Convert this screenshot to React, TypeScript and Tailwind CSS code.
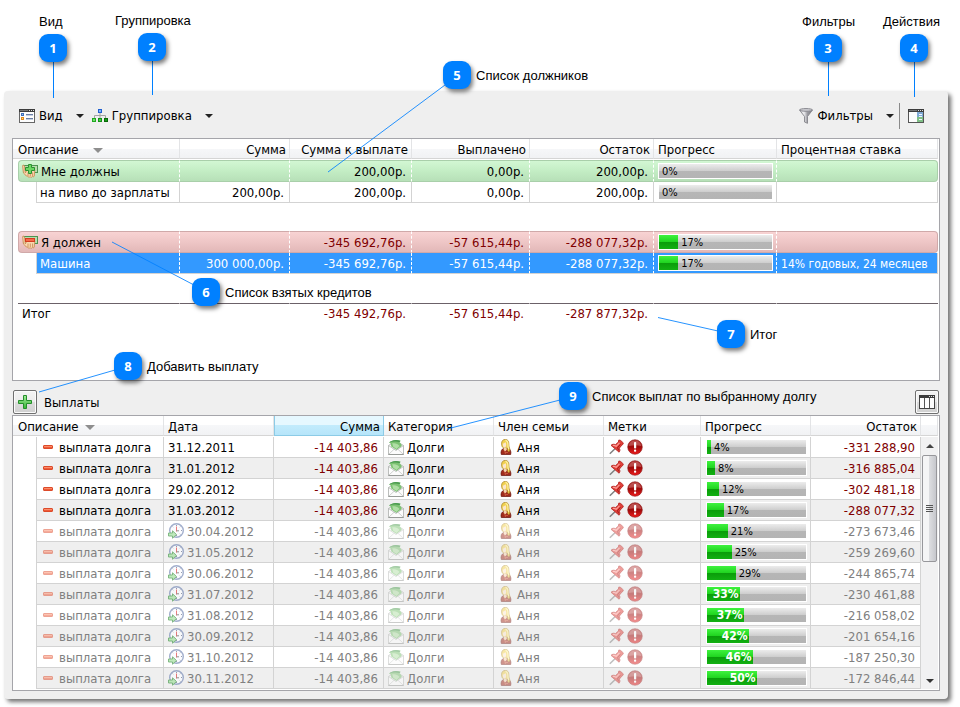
import type { ReactNode } from "react";

/* ---------- icons ---------- */

function ViewIcon() {
  return (
    <svg width="16" height="14" viewBox="0 0 16 14" aria-hidden="true">
      <rect x="0.5" y="0.5" width="15" height="13" fill="#fdfdfd" stroke="#666" />
      <rect x="0" y="0" width="16" height="3" fill="#3c3c3c" />
      <path d="M1 1.5h8" stroke="#777" />
      <path d="M10 1.5h1M12 1.5h1M14 1.5h1" stroke="#ddd" />
      <rect x="2.5" y="4.5" width="2" height="2" fill="#9dc0f0" stroke="#3f6fb8" />
      <rect x="2.5" y="8.5" width="2" height="2" fill="#ffd480" stroke="#e08a1c" />
      <path d="M7 5.5h7M7 9.5h7" stroke="#6a7ea5" />
      <path d="M7 6.500h7M7 10.500h7" stroke="#c5cfe0" />
    </svg>
  );
}

function GroupIcon() {
  return (
    <svg width="16" height="14" viewBox="0 0 16 14" aria-hidden="true">
      <path d="M8 4v2.500M2.500 9V6.500h11V9M8 6.500V9" fill="none" stroke="#a4a4a4" />
      <rect x="6.500" y="0.500" width="3" height="3" fill="#7db4ff" stroke="#1f5fd0" />
      <rect x="0.500" y="9.500" width="3" height="3" fill="#6fe06a" stroke="#1fa81f" />
      <rect x="6.500" y="9.500" width="3" height="3" fill="#46cc46" stroke="#159015" />
      <rect x="12.500" y="9.500" width="3" height="3" fill="#16a016" stroke="#086808" />
    </svg>
  );
}

function FilterIcon() {
  return (
    <svg width="14" height="16" viewBox="0 0 14 16" aria-hidden="true">
      <defs>
        <linearGradient id="funnel" x1="0" x2="1">
          <stop offset="0" stopColor="#d4d4d8" />
          <stop offset="0.35" stopColor="#eeeef0" />
          <stop offset="0.6" stopColor="#9c9ca2" />
          <stop offset="1" stopColor="#77777e" />
        </linearGradient>
      </defs>
      <path d="M0.5 2L5.500 8.500V14l3 1.300V8.500L13.500 2z" fill="url(#funnel)" stroke="#85858a" strokeWidth="0.9" />
      <ellipse cx="7" cy="1.900" rx="6.400" ry="1.400" fill="#c9c9ce" stroke="#85858b" strokeWidth="0.9" />
    </svg>
  );
}

function ActionsIcon() {
  return (
    <svg width="16" height="14" viewBox="0 0 16 14" aria-hidden="true">
      <rect x="0.500" y="0.500" width="15" height="13" fill="#fdfdfd" stroke="#555" />
      <rect x="0" y="0" width="16" height="3" fill="#3c3c3c" />
      <path d="M1 1.500h8" stroke="#777" />
      <path d="M10 1.500h1M12 1.500h1M14 1.500h1" stroke="#ddd" />
      <rect x="9" y="3" width="6" height="5" fill="#7fa9d4" />
      <rect x="9" y="8" width="6" height="5" fill="#7fbf86" />
      <path d="M11 5.500h3M11 7.500h3M11 10.500h3" stroke="#eef6ff" />
    </svg>
  );
}

function ColumnsIcon() {
  return (
    <svg width="16" height="14" viewBox="0 0 16 14" aria-hidden="true">
      <rect x="0.500" y="0.500" width="15" height="13" fill="#fdfdfd" stroke="#444" />
      <rect x="0" y="0" width="16" height="3" fill="#3c3c3c" />
      <path d="M10 1.500h1M12 1.500h1M14 1.500h1" stroke="#ddd" />
      <path d="M5.500 3v10M10.500 3v10" stroke="#555" />
    </svg>
  );
}

function PlusIcon() {
  return (
    <svg width="14" height="14" viewBox="0 0 14 14" aria-hidden="true">
      <defs>
        <linearGradient id="plus" x1="0" y1="0" x2="0" y2="1">
          <stop offset="0" stopColor="#a4eb9a" />
          <stop offset="1" stopColor="#37b637" />
        </linearGradient>
      </defs>
      <path d="M5.500 0.500h3v5h5v3h-5v5h-3v-5h-5v-3h5z" fill="url(#plus)" stroke="#248f2a" strokeLinejoin="round" />
    </svg>
  );
}

function MoneyHandIcon({ kind }: { kind: "plus" | "minus" }) {
  return (
    <svg width="16" height="14" viewBox="0 0 16 14" aria-hidden="true">
      <rect x="1.500" y="1.500" width="14" height="7" fill="#b9dcae" stroke="#4c9350" />
      <path d="M0.600 1.500c1-.9 2 0 2 1.500l.7 6 1.500-3h8l-.5 6c-.3 1-1.300 1-1.700.3-.5 1.200-1.800 1.300-2.500.4-.8.700-2 .6-2.400-.5C3.500 12 2.300 10 1.300 8.300z" fill="#f8d7b0" stroke="#cc9058" strokeWidth="0.9" />
      <path d="M6 8.500v3.500M8.300 8.500v3.500M10.600 8.500v3.500" stroke="#cc9058" strokeWidth="0.900" />
      {kind === "plus" ? (
        <path d="M6.500 0.500h3v3h3v3h-3v3h-3v-3h-3v-3h3z" fill="#6bd763" stroke="#2a9230" />
      ) : (
        <rect x="3.500" y="3.500" width="9" height="3" fill="#f5694a" stroke="#d43c20" />
      )}
    </svg>
  );
}

function MinusIcon() {
  return (
    <svg width="10" height="4" viewBox="0 0 10 4" aria-hidden="true">
      <rect x="0.500" y="0.500" width="9" height="3" rx="0.500" fill="#fb8d6a" stroke="#dc4a2a" />
      <path d="M1 2.500h8" stroke="#ee5a38" />
    </svg>
  );
}

function ClockIcon() {
  return (
    <svg width="16" height="16" viewBox="0 0 16 16" aria-hidden="true">
      <circle cx="8.500" cy="7.500" r="6.800" fill="#fbfcff" stroke="#7b8db8" strokeWidth="1.400" />
      <path d="M8.500 2v1M14 7.500h-1M8.500 13v-1M12.400 3.600l-.6.600M12.400 11.400l-.6-.6M4.600 3.600l.6.600" stroke="#6b7690" />
      <path d="M8.500 3.500v5" stroke="#e04545" />
      <path d="M8.500 7.800h2.500" stroke="#666" />
      <path d="M0.500 10h4V7.800l4 3.700-4 3.700V13h-4z" fill="#a5e0a0" stroke="#3f9446" strokeWidth="0.900" />
    </svg>
  );
}

function EnvelopeIcon() {
  return (
    <svg width="16" height="16" viewBox="0 0 16 16" aria-hidden="true">
      <path d="M0.500 6.500L3 5h10l2.500 1.500v9H0.500z" fill="#f4f5f4" stroke="#a9aca9" strokeWidth="0.800" />
      <path d="M1 3.500C4 .8 8 .3 12.500 1.700l-1 1.600c1.300.8 2 2 2.300 3.700L8.500 11 3 7.200C3.500 5.500 2.800 4 1 3.500z" fill="#7cc272" />
      <path d="M1 3.500C4 .8 8 .3 12.500 1.700l-1 1.600C8 2.200 5 2.500 1 3.500z" fill="#4c9a50" />
      <path d="M4 4.500c3-.8 5.500 0 7.500 2.500l-3 3L5 7.500c0-1.200-.3-2.200-1-3z" fill="#b0dea5" />
      <path d="M0.500 6.500L8 11.500l7.500-5v9H0.500z" fill="#fcfcfc" stroke="#b4b6b4" strokeWidth="0.800" />
      <path d="M0.800 15.200L6 10.300M15.200 15.200L10 10.300" stroke="#c4c6c4" strokeWidth="0.800" />
      <path d="M0.500 15.500h15" stroke="#989b98" />
    </svg>
  );
}

function WomanIcon() {
  return (
    <svg width="12" height="16" viewBox="0 0 12 16" aria-hidden="true">
      <path d="M1.300 15.500C0.500 12.500 1.500 9.800 4 9.500h4c2.500.3 3.300 3 2.700 6z" fill="#a02c1c" stroke="#651008" strokeWidth="0.700" />
      <path d="M5 13.500h3M4.500 11.500l1 3.500" stroke="#c95a42" strokeWidth="0.900" />
      <path d="M1.600 5C1.300 1.800 3.200.4 5.300.4c2.400 0 3.500 1.700 3.500 4 0 2 .1 3.300.7 4.600.6 1.300.5 3-.7 3.800C7.600 12.500 7.400 10.500 7.300 9L3.500 8.800C2.300 8.500 1.700 7 1.600 5z" fill="#f0d04e" stroke="#a8801c" strokeWidth="0.700" />
      <path d="M5.500 1.300C7.300 1.500 7.900 3 7.900 5s.2 3.500.8 5" fill="none" stroke="#fdf0a0" strokeWidth="1.200" />
      <path d="M2.700 4.500c1.200-.2 2.200-.8 2.600-1.600.7.800 1.100 2 .9 3.300-.2 1.400-1 2.300-1.900 2.300S2.700 7 2.700 4.500z" fill="#fbe6cc" />
      <path d="M4 8.500h2.500l.3 2.300-1.500 1.400L3.600 11z" fill="#f6d5ad" />
    </svg>
  );
}

function PinIcon() {
  return (
    <svg width="15" height="16" viewBox="0 0 15 16" aria-hidden="true">
      <path d="M0.800 14.800L6 9.800" stroke="#808080" strokeWidth="1.500" />
      <path d="M9.800 1c1.600-.4 4.600 2.400 4.500 4l-1.500 1.200-2.500 3c.9 1.400.8 2.700-.2 4L2 6.300c1.300-1.200 2.800-1.400 4.400-.6l3-2.700z" fill="#e0403a" stroke="#b01c18" strokeWidth="0.800" />
      <path d="M3.800 6.500c1.500-.4 2.300 0 3.300.9l3.400-3.600" fill="none" stroke="#ff9f98" strokeWidth="1.200" />
      <path d="M9.500 11.300c0-1-.4-1.800-1.200-2.400l3.200-3.600" fill="none" stroke="#a31613" strokeWidth="0.900" />
    </svg>
  );
}

function AlertIcon() {
  return (
    <svg width="16" height="16" viewBox="0 0 16 16" aria-hidden="true">
      <defs>
        <linearGradient id="alert" x1="0" y1="0" x2="0" y2="1">
          <stop offset="0" stopColor="#a81a18" />
          <stop offset="0.5" stopColor="#a00a0a" />
          <stop offset="1" stopColor="#f01c1c" />
        </linearGradient>
      </defs>
      <circle cx="8" cy="8" r="7.300" fill="url(#alert)" stroke="#8d1a1a" strokeWidth="0.600" />
      <path d="M1.800 7C2 3.500 4.800 1.500 8 1.500S14 3.500 14.200 7C10 5.800 6 6 1.800 7z" fill="#fff" fillOpacity="0.250" />
      <rect x="7" y="3" width="2.200" height="6.500" rx="0.800" fill="#fff" />
      <rect x="7" y="10.600" width="2.200" height="2.200" rx="0.800" fill="#fff" />
    </svg>
  );
}

function Arrow({ width, height, className }: { width: number; height: number; className: string }) {
  return (
    <svg width={width} height={height} viewBox="0 0 10 5" preserveAspectRatio="none" className={className} aria-hidden="true">
      <path d="M0 0h10L5 5z" />
    </svg>
  );
}

/* ---------- shared parts ---------- */

const headBg =
  "bg-[linear-gradient(#ffffff_50%,#f6f7f9_50%,#f1f2f4)] border-b border-b-[#d5d5d5] border-r border-r-[#e3e4e6]";
const line = "border-b border-r border-[#d3d3d3]";

function HeadCell({
  children,
  right = false,
  active = false,
  span = 1,
  indent = false,
}: {
  children: ReactNode;
  right?: boolean;
  active?: boolean;
  span?: number;
  indent?: boolean;
}) {
  const bg = active
    ? "bg-[linear-gradient(#e6f8ff_50%,#c2ebfc_50%,#b6e5fa)] border-b border-r border-l border-[#8ccbe6]"
    : headBg;
  return (
    <th
      colSpan={span}
      scope="col"
      className={`h-5 p-0 pt-[3px] font-normal ${bg} ${right ? "pr-[3px] text-right" : "text-left"} ${indent ? "pl-[5px]" : "pl-1"}`}
    >
      {children}
    </th>
  );
}

function ProgressBar({ value }: { value: number }) {
  const inside = value > 30;
  return (
    <div
      role="progressbar"
      aria-valuenow={value}
      aria-label="Прогресс"
      className="flex h-4 items-stretch border border-white bg-[linear-gradient(#ececec,#cdcdcd_50%,#b6b6b6_50%,#b4b4b4)] text-[11px] leading-4 text-black"
    >
      {value > 0 && (
        <div
          className="flex justify-end bg-[linear-gradient(#3ef23e,#1fd31f_50%,#0a9c0a_50%,#12b012)]"
          style={{ width: `${value}%` }}
        >
          {inside && <span className="pr-px text-xs leading-[14px] font-bold text-white">{value}%</span>}
        </div>
      )}
      {!inside && <span className="pl-[3px]">{value}%</span>}
    </div>
  );
}

function ToolButton({ icon, label }: { icon: ReactNode; label: string }) {
  return (
    <button type="button" className="flex items-center gap-1">
      {icon}
      <span>{label}</span>
      <Arrow width={8} height={4} className="ml-[9px] fill-[#222]" />
    </button>
  );
}

/* ---------- debts table ---------- */

type Debt = { sum: string; due: string; paid: string; rest: string; progress: number; rate: string };

function GroupRow({ tone, label, icon, debt }: { tone: "green" | "red"; label: string; icon: ReactNode; debt: Debt }) {
  const bg =
    tone === "green"
      ? "bg-[linear-gradient(#d2f7d3,#c3edc4_50%,#b7e0b8)] border-y border-y-[#a9cfaa]"
      : "bg-[linear-gradient(#f8d3d3,#eec6c6_50%,#e2b8b8)] border-y border-y-[#d0a9a9]";
  const edge = tone === "green" ? "border-[#a9cfaa]" : "border-[#d0a9a9]";
  const num = `p-0 pt-0.5 pr-[5px] text-right border-r border-r-white [border-right-style:dashed] ${bg} ${tone === "red" ? "text-[#800000]" : ""}`;
  return (
    <tr className="h-[22px]">
      <td className="p-0" />
      <td colSpan={2} className={`rounded-l-sm border-l border-r border-r-white p-0 pl-[3px] [border-right-style:dashed] ${edge} ${bg}`}>
        <div className="flex items-center gap-[3px]">
          {icon}
          <span className="pt-0.5">{label}</span>
        </div>
      </td>
      <td className={num}>{debt.sum}</td>
      <td className={num}>{debt.due}</td>
      <td className={num}>{debt.paid}</td>
      <td className={num}>{debt.rest}</td>
      <td className={`border-r border-r-white p-0 pr-[3px] pl-1 [border-right-style:dashed] ${bg}`}>
        <ProgressBar value={debt.progress} />
      </td>
      <td className={`rounded-r-sm border-r p-0 ${edge} ${bg}`}>{debt.rate}</td>
    </tr>
  );
}

function DebtRow({ label, debt, selected = false }: { label: string; debt: Debt; selected?: boolean }) {
  const tone = selected
    ? "bg-[#3399ff] text-white border-b border-b-[#d3d3d3] border-r border-r-white [border-right-style:dashed]"
    : line;
  const num = `p-0 pt-0.5 pr-[5px] text-right ${tone}`;
  return (
    <tr className="h-[21px]">
      <td className="p-0" />
      <td className="p-0" />
      <td className={`border-l border-l-[#d3d3d3] p-0 pt-0.5 pl-[3px] ${tone}`}>{label}</td>
      <td className={num}>{debt.sum}</td>
      <td className={num}>{debt.due}</td>
      <td className={num}>{debt.paid}</td>
      <td className={num}>{debt.rest}</td>
      <td className={`p-0 pr-[3px] pl-1 ${tone}`}>
        <ProgressBar value={debt.progress} />
      </td>
      <td className={`p-0 pt-0.5 pl-1 text-xs leading-4 ${selected ? "border-r border-b border-[#d3d3d3] bg-[#3399ff] text-white" : line}`}>
        {debt.rate}
      </td>
    </tr>
  );
}

const lent: Debt = { sum: "", due: "200,00р.", paid: "0,00р.", rest: "200,00р.", progress: 0, rate: "" };
const owed: Debt = { sum: "", due: "-345 692,76р.", paid: "-57 615,44р.", rest: "-288 077,32р.", progress: 17, rate: "" };

function DebtsTable() {
  const total = "border-t border-t-[#6b6168] border-r border-r-white p-0";
  return (
    <div className="min-h-[243px] border border-[#a5a5aa] bg-white pr-px">
      <table className="w-full table-fixed border-separate border-spacing-0 whitespace-nowrap">
        <colgroup>
          <col className="w-[5px]" />
          <col className="w-[18px]" />
          <col className="w-36" />
          <col className="w-[110px]" />
          <col className="w-[122px]" />
          <col className="w-[118px]" />
          <col className="w-[124px]" />
          <col className="w-[123px]" />
          <col />
        </colgroup>
        <thead>
          <tr>
            <HeadCell span={3} indent>
              <span className="flex items-center gap-[14px]">
                Описание
                <Arrow width={10} height={5} className="fill-[#8e8e8e]" />
              </span>
            </HeadCell>
            <HeadCell right>Сумма</HeadCell>
            <HeadCell right>Сумма к выплате</HeadCell>
            <HeadCell right>Выплачено</HeadCell>
            <HeadCell right>Остаток</HeadCell>
            <HeadCell>Прогресс</HeadCell>
            <HeadCell>Процентная ставка</HeadCell>
          </tr>
        </thead>
        <tbody>
          <tr className="h-px">
            <td colSpan={9} className="p-0" />
          </tr>
          <GroupRow tone="green" label="Мне должны" icon={<MoneyHandIcon kind="plus" />} debt={lent} />
          <DebtRow label="на пиво до зарплаты" debt={{ ...lent, sum: "200,00р." }} />
          <tr className="h-7">
            <td colSpan={9} className="p-0" />
          </tr>
          <GroupRow tone="red" label="Я должен" icon={<MoneyHandIcon kind="minus" />} debt={owed} />
          <DebtRow label="Машина" debt={{ ...owed, sum: "300 000,00р.", rate: "14% годовых, 24 месяцев" }} selected />
          <tr className="h-[29px]">
            <td colSpan={9} className="p-0" />
          </tr>
          <tr className="h-5">
            <td className="p-0" />
            <td colSpan={2} className={`${total} pl-1`}>
              Итог
            </td>
            <td className={total} />
            <td className={`${total} pr-[5px] text-right text-[#800000]`}>-345 492,76р.</td>
            <td className={`${total} pr-[5px] text-right text-[#800000]`}>-57 615,44р.</td>
            <td className={`${total} pr-[5px] text-right text-[#800000]`}>-287 877,32р.</td>
            <td className={total} />
            <td className="border-t border-t-[#6b6168] p-0" />
          </tr>
        </tbody>
      </table>
    </div>
  );
}

/* ---------- payments table ---------- */

const payments = [
  { date: "31.12.2011", progress: 4, rest: "-331 288,90", planned: false },
  { date: "31.01.2012", progress: 8, rest: "-316 885,04", planned: false },
  { date: "29.02.2012", progress: 12, rest: "-302 481,18", planned: false },
  { date: "31.03.2012", progress: 17, rest: "-288 077,32", planned: false },
  { date: "30.04.2012", progress: 21, rest: "-273 673,46", planned: true },
  { date: "31.05.2012", progress: 25, rest: "-259 269,60", planned: true },
  { date: "30.06.2012", progress: 29, rest: "-244 865,74", planned: true },
  { date: "31.07.2012", progress: 33, rest: "-230 461,88", planned: true },
  { date: "31.08.2012", progress: 37, rest: "-216 058,02", planned: true },
  { date: "30.09.2012", progress: 42, rest: "-201 654,16", planned: true },
  { date: "31.10.2012", progress: 46, rest: "-187 250,30", planned: true },
  { date: "30.11.2012", progress: 50, rest: "-172 846,44", planned: true },
];

function PaymentsTable() {
  return (
    <div className="flex border border-[#a5a5aa] bg-white pr-px pb-px">
      <table className="min-w-0 flex-1 table-fixed border-separate border-spacing-0 whitespace-nowrap">
        <colgroup>
          <col className="w-[23px]" />
          <col className="w-32" />
          <col className="w-[110px]" />
          <col className="w-[110px]" />
          <col className="w-[110px]" />
          <col className="w-[110px]" />
          <col className="w-[97px]" />
          <col className="w-[110px]" />
          <col />
        </colgroup>
        <thead>
          <tr>
            <HeadCell span={2} indent>
              <span className="flex items-center gap-[6px]">
                Описание
                <Arrow width={10} height={5} className="fill-[#8e8e8e]" />
              </span>
            </HeadCell>
            <HeadCell>Дата</HeadCell>
            <HeadCell right active>
              Сумма
            </HeadCell>
            <HeadCell>Категория</HeadCell>
            <HeadCell>Член семьи</HeadCell>
            <HeadCell>Метки</HeadCell>
            <HeadCell>Прогресс</HeadCell>
            <HeadCell right>Остаток</HeadCell>
          </tr>
        </thead>
        <tbody>
          <tr className="h-px">
            <td colSpan={9} className="p-0" />
          </tr>
          {payments.map((p, i) => {
            const fade = p.planned ? "opacity-50" : "";
            const bg = i % 2 ? "bg-[#efefef]" : "bg-white";
            const cell = `p-0 ${line} ${bg}`;
            const money = p.planned ? "text-[#808080]" : "text-[#800000]";
            return (
              <tr key={p.date} className={`h-[21px] ${p.planned ? "text-[#808080]" : ""}`}>
                <td className="p-0" />
                <td className={`${cell} border-l pl-[6px]`}>
                  <div className="flex items-center gap-[6px]">
                    <span className={fade}>
                      <MinusIcon />
                    </span>
                    <span className="pt-0.5">выплата долга</span>
                  </div>
                </td>
                <td className={`${cell} pl-1`}>
                  <div className="flex items-center gap-[3px]">
                    {p.planned && (
                      <span className="opacity-70">
                        <ClockIcon />
                      </span>
                    )}
                    <span className="pt-0.5">{p.date}</span>
                  </div>
                </td>
                <td className={`${cell} pt-0.5 pr-[5px] text-right ${money}`}>-14 403,86</td>
                <td className={`${cell} pl-1`}>
                  <div className="flex items-center gap-[3px]">
                    <span className={fade}>
                      <EnvelopeIcon />
                    </span>
                    <span className="pt-0.5">Долги</span>
                  </div>
                </td>
                <td className={`${cell} pl-[6px]`}>
                  <div className="flex items-center gap-[5px]">
                    <span className={fade}>
                      <WomanIcon />
                    </span>
                    <span className="pt-0.5">Аня</span>
                  </div>
                </td>
                <td className={`${cell} pl-[5px]`}>
                  <div className={`flex items-center gap-[3px] ${fade}`}>
                    <PinIcon />
                    <AlertIcon />
                  </div>
                </td>
                <td className={`${cell} pr-[3px] pl-[5px]`}>
                  <ProgressBar value={p.progress} />
                </td>
                <td className={`${cell} pt-0.5 pr-[5px] text-right ${money}`}>{p.rest}</td>
              </tr>
            );
          })}
        </tbody>
      </table>
      <div className="flex w-[17px] flex-col">
        <div className={`h-5 ${headBg}`} />
        <div className="mt-px flex flex-1 flex-col items-center bg-[#f1f1f2]">
          <button type="button" aria-label="Вверх" className="flex h-[18px] w-full items-center justify-center">
            <Arrow width={8} height={4} className="rotate-180 fill-[#444]" />
          </button>
          <div className="flex h-[107px] w-[15px] flex-col items-center justify-center gap-px rounded-xs border border-[#97979b] bg-[linear-gradient(90deg,#f5f5f6_45%,#dcdde0_50%,#c6c7cc)]">
            <div className="h-px w-[7px] bg-[#555]" />
            <div className="h-px w-[7px] bg-[#555]" />
            <div className="h-px w-[7px] bg-[#555]" />
            <div className="h-px w-[7px] bg-[#555]" />
          </div>
          <button type="button" aria-label="Вниз" className="mt-auto flex h-[17px] w-full items-center justify-center">
            <Arrow width={8} height={4} className="fill-[#333]" />
          </button>
        </div>
      </div>
    </div>
  );
}

/* ---------- annotations ---------- */

const badges = [
  { n: 1, pos: "left-[39px] top-[34px]" },
  { n: 2, pos: "left-[138px] top-[33px]" },
  { n: 3, pos: "left-[814px] top-[34px]" },
  { n: 4, pos: "left-[900px] top-[34px]" },
  { n: 5, pos: "left-[443px] top-[61px]" },
  { n: 6, pos: "left-[192px] top-[278px]" },
  { n: 7, pos: "left-[717px] top-[320px]" },
  { n: 8, pos: "left-[114px] top-[352px]" },
  { n: 9, pos: "left-[559px] top-[382px]" },
];

const notes = [
  { text: "Вид", pos: "left-[39px] top-[14px]" },
  { text: "Группировка", pos: "left-[115px] top-[13px]" },
  { text: "Фильтры", pos: "left-[802px] top-[14px]" },
  { text: "Действия", pos: "left-[883px] top-[14px]" },
  { text: "Список должников", pos: "left-[476px] top-[68px]" },
  { text: "Список взятых кредитов", pos: "left-[225px] top-[285px]" },
  { text: "Итог", pos: "left-[750px] top-[327px]" },
  { text: "Добавить выплату", pos: "left-[147px] top-[359px]" },
  { text: "Список выплат по выбранному долгу", pos: "left-[592px] top-[389px]" },
];

function Annotations() {
  return (
    <div className="pointer-events-none absolute inset-0 font-['Liberation_Sans',Arial,sans-serif] text-[13px] leading-4 whitespace-nowrap">
      <svg className="absolute top-0 left-0" width="960" height="707" viewBox="0 0 960 707" aria-hidden="true">
        <g stroke="#0080ff" fill="none">
          <path d="M53.500 60V98M152.500 60V95M828.500 60V96M914.500 60V97" />
          <path d="M445 85L328 172M194 285L112 242M718 331L658 317.500M115 370L39 392M560 400L447 429" strokeOpacity="0.850" />
        </g>
      </svg>
      {badges.map((b) => (
        <span
          key={b.n}
          className={`absolute flex size-7 items-center justify-center rounded-[9px] bg-[#0080ff] font-['Noto_Sans',sans-serif] text-[13px] font-bold text-white shadow-[2px_3px_4px_rgba(0,0,0,0.5)] ${b.pos}`}
        >
          {b.n}
        </span>
      ))}
      {notes.map((n) => (
        <span key={n.text} className={`absolute ${n.pos}`}>
          {n.text}
        </span>
      ))}
    </div>
  );
}

export default function App() {
  const square =
    "flex size-6 items-center justify-center rounded-xs border border-[#707070] bg-[linear-gradient(#f4f4f4,#ebebeb_50%,#dddddd_50%,#d0d0d0)] shadow-[inset_0_0_0_1px_#fbfbfb]";
  return (
    <div className="relative min-h-screen bg-white pt-[91px] pr-3 pb-2 pl-1 font-['DejaVu_Sans_Condensed','Noto_Sans',sans-serif] text-[13px] leading-4 text-black">
      <main className="rounded-sm bg-[#efefef] px-2 pb-2 shadow-[3px_3px_4px_rgba(0,0,0,0.55)]">
        <div className="flex h-[47px] items-center pt-[3px] pl-[7px]">
          <ToolButton icon={<ViewIcon />} label="Вид" />
          <div className="ml-2">
            <ToolButton icon={<GroupIcon />} label="Группировка" />
          </div>
          <div className="ml-auto">
            <ToolButton icon={<FilterIcon />} label="Фильтры" />
          </div>
          <div className="ml-[5px] h-[26px] w-px bg-[#8a8a8a]" />
          <button type="button" aria-label="Действия" className="mr-4 ml-2">
            <ActionsIcon />
          </button>
        </div>
        <DebtsTable />
        <div className="flex h-[34px] items-end justify-between px-px pb-px">
          <div className="flex items-center gap-[7px]">
            <button type="button" aria-label="Добавить выплату" className={square}>
              <PlusIcon />
            </button>
            <h2 className="pt-0.5">Выплаты</h2>
          </div>
          <button type="button" aria-label="Колонки" className={square}>
            <ColumnsIcon />
          </button>
        </div>
        <PaymentsTable />
      </main>
      <Annotations />
    </div>
  );
}
